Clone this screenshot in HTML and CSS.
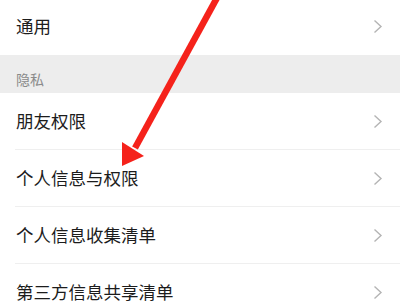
FILE: index.html
```html
<!DOCTYPE html>
<html lang="zh-CN">
<head>
<meta charset="utf-8">
<link rel="stylesheet" href="styles.css">
</head>
<body>
<div class="page">
  <div class="group">
    <div class="item first top"><span class="label">通用</span><svg class="chev" viewBox="0 0 10 15" width="10" height="15"><polyline points="1.5,1.5 8,7.5 1.5,13.5"/></svg></div>
  </div>
  <div class="section">隐私</div>
  <div class="group">
    <div class="item first"><span class="label">朋友权限</span><svg class="chev" viewBox="0 0 10 15" width="10" height="15"><polyline points="1.5,1.5 8,7.5 1.5,13.5"/></svg></div>
    <div class="item"><span class="label">个人信息与权限</span><svg class="chev" viewBox="0 0 10 15" width="10" height="15"><polyline points="1.5,1.5 8,7.5 1.5,13.5"/></svg></div>
    <div class="item"><span class="label">个人信息收集清单</span><svg class="chev" viewBox="0 0 10 15" width="10" height="15"><polyline points="1.5,1.5 8,7.5 1.5,13.5"/></svg></div>
    <div class="item"><span class="label">第三方信息共享清单</span><svg class="chev" viewBox="0 0 10 15" width="10" height="15"><polyline points="1.5,1.5 8,7.5 1.5,13.5"/></svg></div>
  </div>
  <svg class="arrow" viewBox="0 0 400 308" width="400" height="308">
    <line x1="218" y1="-4" x2="135" y2="148" stroke="#f5221b" stroke-width="6.5"/>
    <polygon points="122,166 122,142 144,156" fill="#f5221b"/>
  </svg>
</div>
</body>
</html>
```

FILE: styles.css
```css
html, body {
  margin: 0;
  padding: 0;
  background: #ffffff;
}
body {
  font-family: "Noto Sans CJK SC", "Noto Sans", sans-serif;
  width: 400px;
  height: 308px;
  overflow: hidden;
}
.page {
  position: relative;
  width: 400px;
  height: 308px;
}
.group {
  background: #ffffff;
  padding-left: 15px;
}
.item {
  display: flex;
  align-items: center;
  justify-content: space-between;
  height: 56px;
  border-top: 1px solid #efefef;
  padding-left: 1px;
  padding-right: 17px;
}
.item.first {
  border-top: none;
}
.item.top {
  height: 52px;
  padding-bottom: 3px;
}
.label {
  font-size: 17.5px;
  color: #1c1c1c;
  line-height: 24px;
}
.chev {
  display: block;
  fill: none;
  stroke: #b4b4b4;
  stroke-width: 1.4;
}
.section {
  height: 38px;
  box-sizing: border-box;
  background: #ededed;
  padding: 14px 0 0 16px;
  font-size: 14px;
  line-height: 20px;
  color: #8a8a8a;
}
.arrow {
  position: absolute;
  left: 0;
  top: 0;
  pointer-events: none;
}
```
